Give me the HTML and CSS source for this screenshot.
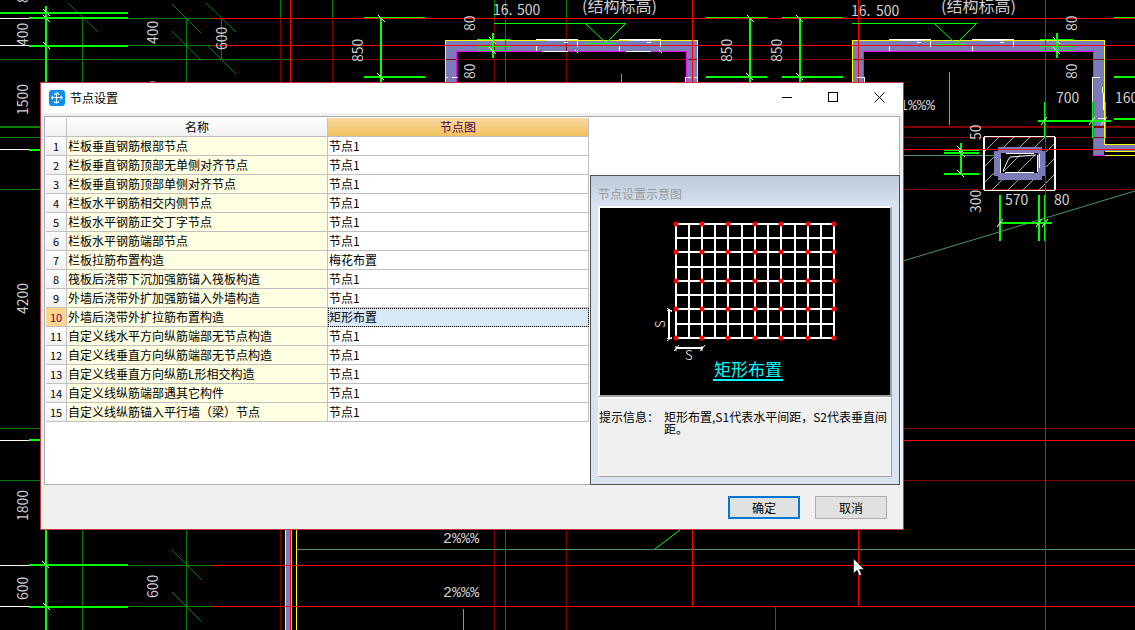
FILE: index.html
```html
<!DOCTYPE html>
<html lang="zh-CN">
<head>
  <meta charset="UTF-8" />
  <meta name="viewport" content="width=device-width, initial-scale=1.0"/>
  <title>节点设置</title>
  <link rel="stylesheet" href="styles.css">
</head>
<body>
<div class="desktop">
  <svg class="drawing" aria-hidden="true">
    <!-- walls -->
    <path class="wall" d="M446 41h251v41h-11v-30h-229v30h-11z M853 41h251v104h31v6h-31v4h-10v-103h-230v30h-11z"/>
    <path class="wall" d="M286 530h6v400h-6z"/>

    <!-- axis grid -->
    <g class="axis-dim">
      <path d="M82.500 19V900M186.500 19V900M221.500 18V59M280.500 0V18M332.500 0V18M494.500 0V18M566.500 0V18"/>
      <path d="M128 18.500H212M128 45.500H212M0 59.500H290M0 137.500H40M0 189.500H40M0 428.500H40M0 480.500H40M128 565.500H212M128 606.500H212"/>
      <path d="M0 127H40" stroke-width="2"/>
    </g>
    <g class="axis-dark">
      <path d="M280.500 18V900M332.500 18V82M494.500 18V900M566.500 18V900"/>
      <path d="M290 59.500H4000M903 137.500H4000M903 189.500H4000M903 428.500H4000M903 480.500H4000"/>
      <path d="M903 127H4000" stroke-width="2"/>
    </g>
    <path class="hatch-dim" d="M68 3l30 29M172 4l29 29M206 3l30 29M172 31l30 30M208 46l28 28M172 550l30 30M172 592l30 30"/>
    <g class="slope">
      <path d="M297 549.500H4000M903 155.500H1003"/>
      <path class="smooth" d="M903 261L1135 191"/>
    </g>

    <!-- wall outlines -->
    <path class="outer" d="M445.500 82V40.500H697.500V82M852.500 82V40.500H1104.500V144.500H4000M1105 155.500H4000M1105 151.500H1135M285.500 530V900M291.500 530V900M296.500 530V900"/>
    <path class="inner" d="M456.500 82V51.500H686.500V82M863.500 82V51.500H1093.500V155.500H1105"/>

    <!-- column -->
    <path class="hatch" d="M984 152l15-15M984 167l30-30M984 183l46-46M992 190l53-53M1008 190l47-47M1023 190l32-32M1039 190l16-16"/>
    <path class="wall" d="M998 147h44v4h3v25h-3v4h-44v-4h-4v-25h4z"/>
    <path d="M1001 153h37v20h-37z"/>
    <path class="hatch" d="M1003 172l17-17M1018 172l17-17"/>
    <path class="white2" d="M984 137V190M1055 137V190"/>
    <path class="white" d="M984 136.500H1055M984 190.500H1055M1000.500 159V173M1006 153.500H1034M1005 172.500H1034M1037.500 155V172M1039.500 154V168"/>
    <path class="white smooth" d="M1003 171l5-11 2-3 26-2"/>

    <!-- axes -->
    <g class="axis">
      <path d="M290.500 0V900M505.500 0V900M692.500 0V606M858.500 0V606M1045.500 0V900M775.500 606V900"/>
      <path d="M212 18.500H4000M212 45.500H4000M903 149.500H4000M903 440.500H4000M212 565.500H4000M212 606.500H4000"/>
    </g>
    <path class="white" d="M0 18.500H29M0 45.500H29M0 149.500H29M0 440.500H29M0 565.500H29M0 606.500H29"/>

    <!-- windows in the walls -->
    <path class="white" d="M536 39.500H578M546 40.500H568M536.500 46V51M542 51.500H568M577.500 41V47M619 39.500H661M629 40.500H651M619.500 46V51M626 51.500H651M660.500 41V47M889 39.500H931M899 40.500H921M889.500 46V51M930.500 41V47M972 39.500H1014M982 40.500H1004M972.500 46V51M1013.500 41V47"/>
    <path class="white" d="M564 42.500h4M647 42.500h4M917 42.500h4M1000 42.500h4M575 50l3 3M659 50l3 3M446 77.500h2M452 77.500h6M685.500 82v-5h5M694 77.500h4M857 77.500h7v4M1092.500 102V77.500h7M1102.500 87v6M1103.500 93v17M1098 118.500h8"/>

    <!-- dimensions -->
    <g class="dim2">
      <path d="M46 6V900M0 13H128M29 18H128M29 46H128M29 150H41M29 440H41M29 565H128M29 607H128"/>
      <path d="M381 17V82M750 17V82M800 17V82M364 77H425M706 77H767M782 77H843M1114 77H4000M1114 119H4000"/>
      <path d="M493 33V58M1057 33V58M1038 121H1111M961 143V175M944 153H979M944 174H979"/>
      <path d="M1000 195V241M1039 195V241M1000 223H1052"/>
    </g>
    <g class="dim">
      <path d="M364 17.500H425M706 17.500H767M782 17.500H843M1114 17.500H4000M477 39.500H510M477 46.500H510M477 50.500H510M1040 39.500H1073M1040 46.500H1073M1040 50.500H1073"/>
      <path d="M1044.500 102V138M1092.500 102V138M1105.500 102V138M944 150.500H979M1044.500 195V241M621.500 74V82M949.500 72V125M463.500 609V900"/>
      <path d="M494 23.500H626M585 43.500H616M852 23.500H977M936 44.500H966"/>
      <path class="smooth" d="M586 24l20 19 19-19M935 24l21 20 20-20M655 549l25-19"/>
    </g>
    <path class="white tick" d="M43 9l7 7M43 15l7 7M43 42l7 7M42 561l7 7M43 603l7 7M378 15l7 7M377 73l7 7M747 15l7 7M746 73l7 7M796 15l7 7M796 73l7 7M489 37l7 7M489 47l7 7M1053 37l7 7M1053 47l7 7M957 146l7 7M958 150l7 7M957 170l7 7M1041 125l6-8M1089 125l6-8M1101 125l6-8M997 227l6-8M1036 227l6-8M1042 227l6-8"/>

    <!-- dimension texts -->
    <g class="cad-text">
      <text x="28" y="3" transform="rotate(-90 28 3)">80</text>
      <text x="28" y="46" transform="rotate(-90 28 46)">400</text>
      <text x="28" y="115" transform="rotate(-90 28 115)">1500</text>
      <text x="28" y="314" transform="rotate(-90 28 314)">4200</text>
      <text x="28" y="521" transform="rotate(-90 28 521)">1800</text>
      <text x="28" y="600" transform="rotate(-90 28 600)">600</text>
      <text x="158" y="44" transform="rotate(-90 158 44)">400</text>
      <text x="158" y="104" transform="rotate(-90 158 104)">400</text>
      <text x="158" y="598" transform="rotate(-90 158 598)">600</text>
      <text x="227" y="50" transform="rotate(-90 227 50)">600</text>
      <text x="363" y="62" transform="rotate(-90 363 62)">850</text>
      <text x="732" y="62" transform="rotate(-90 732 62)">850</text>
      <text x="782" y="62" transform="rotate(-90 782 62)">850</text>
      <text x="475" y="31" transform="rotate(-90 475 31)">80</text>
      <text x="475" y="79" transform="rotate(-90 475 79)">80</text>
      <text x="1077" y="31" transform="rotate(-90 1077 31)">80</text>
      <text x="1077" y="79" transform="rotate(-90 1077 79)">80</text>
      <text x="981" y="140" transform="rotate(-90 981 140)">50</text>
      <text x="981" y="213" transform="rotate(-90 981 213)">300</text>
      <text x="493" y="15">16.</text>
      <text x="517" y="15">500</text>
      <text x="851" y="16">16.</text>
      <text x="876" y="16">500</text>
      <text x="1056" y="103">700</text>
      <text x="1115" y="103">1600</text>
      <text x="1005" y="205">570</text>
      <text x="1054" y="205">80</text>
      <text class="label" x="582" y="12">(结构标高)</text>
      <text class="label" x="941" y="12">(结构标高)</text>
      <text class="slope-text" x="899" y="110">1%%%</text>
      <text class="slope-text" x="443" y="543">2%%%</text>
      <text class="slope-text" x="443" y="597">2%%%</text>
    </g>
  </svg>

  <div class="dialog" role="dialog" aria-labelledby="dialogTitle">
    <div class="title-bar">
      <svg class="app-icon" viewBox="0 0 16 16">
        <rect width="16" height="16" rx="3" fill="#0d8eef"/>
        <path d="M7.500 4v9M3 7.500h9.500M5.500 5C6 2.500 9.500 2.500 10 5M4 6C2.500 6.500 2.500 8.500 4 9M11.500 6C13.500 6.500 13.500 9 11.500 9M5 11.500C6 13.500 9.500 13.500 10 11" fill="none" stroke="#fff" stroke-width="1.100"/>
      </svg>
      <span class="title" id="dialogTitle">节点设置</span>
      <button class="win-btn" aria-label="最小化"><svg viewBox="0 0 11 11"><path d="M0 5.500h10"/></svg></button>
      <button class="win-btn" aria-label="最大化"><svg viewBox="0 0 11 11"><path d="M.5.500h9v9h-9z"/></svg></button>
      <button class="win-btn" aria-label="关闭"><svg viewBox="0 0 11 11"><path class="smooth" d="M.5.500l10 10M10.500.500l-10 10"/></svg></button>
    </div>

    <div class="workspace">
      <div class="grid-area">
        <table class="node-table">
          <colgroup><col class="col-num"><col><col></colgroup>
          <thead>
            <tr><th></th><th>名称</th><th class="active">节点图</th></tr>
          </thead>
          <tbody>
            <tr><th>1</th><td class="name">栏板垂直钢筋根部节点</td><td>节点1</td></tr>
            <tr><th>2</th><td class="name">栏板垂直钢筋顶部无单侧对齐节点</td><td>节点1</td></tr>
            <tr><th>3</th><td class="name">栏板垂直钢筋顶部单侧对齐节点</td><td>节点1</td></tr>
            <tr><th>4</th><td class="name">栏板水平钢筋相交内侧节点</td><td>节点1</td></tr>
            <tr><th>5</th><td class="name">栏板水平钢筋正交丁字节点</td><td>节点1</td></tr>
            <tr><th>6</th><td class="name">栏板水平钢筋端部节点</td><td>节点1</td></tr>
            <tr><th>7</th><td class="name">栏板拉筋布置构造</td><td>梅花布置</td></tr>
            <tr><th>8</th><td class="name">筏板后浇带下沉加强筋锚入筏板构造</td><td>节点1</td></tr>
            <tr><th>9</th><td class="name">外墙后浇带外扩加强筋锚入外墙构造</td><td>节点1</td></tr>
            <tr class="selected"><th>10</th><td class="name">外墙后浇带外扩拉筋布置构造</td><td class="current">矩形布置</td></tr>
            <tr><th>11</th><td class="name">自定义线水平方向纵筋端部无节点构造</td><td>节点1</td></tr>
            <tr><th>12</th><td class="name">自定义线垂直方向纵筋端部无节点构造</td><td>节点1</td></tr>
            <tr><th>13</th><td class="name">自定义线垂直方向纵筋L形相交构造</td><td>节点1</td></tr>
            <tr><th>14</th><td class="name">自定义线纵筋端部遇其它构件</td><td>节点1</td></tr>
            <tr><th>15</th><td class="name">自定义线纵筋锚入平行墙（梁）节点</td><td>节点1</td></tr>
          </tbody>
        </table>
      </div>

      <div class="preview">
        <div class="preview-title">节点设置示意图</div>
        <div class="preview-image">
          <svg viewBox="0 0 290 187">
            <path class="bars" d="M76 16V130M89 16V130M102 16V130M115 16V130M128 16V130M142 16V130M155 16V130M168 16V130M181 16V130M195 16V130M208 16V130M221 16V130M234 16V130"/>
            <path class="bars" d="M75 16H235M75 30H235M75 44H235M75 59H235M75 73H235M75 87H235M75 101H235M75 116H235M75 130H235"/>
            <path class="ties" d="M76 16h0M102 16h0M128 16h0M155 16h0M181 16h0M208 16h0M234 16h0M76 44h0M102 44h0M128 44h0M155 44h0M181 44h0M208 44h0M234 44h0M76 73h0M102 73h0M128 73h0M155 73h0M181 73h0M208 73h0M234 73h0M76 101h0M102 101h0M128 101h0M155 101h0M181 101h0M208 101h0M234 101h0M76 130h0M102 130h0M128 130h0M155 130h0M181 130h0M208 130h0M234 130h0"/>
            <path class="bars" d="M69 101V131M76 140H103"/>
            <path class="arrows" d="M67 100l5 4M67 133l5-4M74 143l5-6M76 138v5M100 143l5-6M102 138v5M67 102.500h5M67 130.500h5"/>
            <text class="mark" x="65" y="120" transform="rotate(-90 65 120)">S</text>
            <text class="mark" x="85" y="152">S</text>
            <text class="caption" x="114" y="168">矩形布置</text>
            <path class="caption-line" d="M113 172H183"/>
          </svg>
        </div>
        <div class="hint">
          <span class="hint-label">提示信息：</span>
          <span class="hint-text">矩形布置,S1代表水平间距，S2代表垂直间距。</span>
        </div>
      </div>
    </div>

    <div class="actions">
      <button class="btn primary">确定</button>
      <button class="btn">取消</button>
    </div>
  </div>

  <svg class="cursor" viewBox="0 0 12 19" aria-hidden="true">
    <path d="M.5.500v15l3.500-3.200 2.300 5.400 2.400-1-2.300-5.200h4.800z" fill="#fff" stroke="#000" stroke-width=".6"/>
  </svg>
</div>
</body>
</html>
```
FILE: styles.css
```css
* {
  box-sizing: border-box;
}

body {
  margin: 0;
  background: #000;
  color: #000;
  font-family: "Noto Sans CJK SC", sans-serif;
  font-size: 12px;
}

.desktop {
  position: relative;
  min-height: 100vh;
  padding: 82px 231px 0 40px;
  overflow: hidden;
}

/* CAD drawing behind the dialog */
.drawing {
  position: absolute;
  top: 0;
  left: 0;
  width: 100%;
  height: 100%;
}

.drawing path {
  shape-rendering: crispEdges;
}

.drawing .smooth,
.drawing .tick,
.drawing .hatch,
.drawing .hatch-dim {
  shape-rendering: auto;
}

.wall { fill: #7b7bb7; }
.axis-dim { stroke: #008000; }
.axis-dark { stroke: #800000; }
.axis { stroke: #f00; }
.slope { stroke: #4a9460; }
.hatch-dim { stroke: #008000; }
.hatch { stroke: #b0b0b0; }
.outer { stroke: #ff0; fill: none; }
.inner { stroke: #f0f; fill: none; }
.white { stroke: #fff; fill: none; }
.white2 { stroke: #fff; stroke-width: 2; }
.dim { stroke: #0f0; fill: none; }
.dim2 { stroke: #0f0; stroke-width: 2; }

.cad-text {
  fill: #d0d0d0;
  font-size: 14px;
}

.cad-text .label {
  font-size: 16px;
}

.cad-text .slope-text {
  font-family: "Liberation Mono", monospace;
  font-size: 15px;
}

/* dialog window */
.dialog {
  position: relative;
  background: #f0f0f0;
  border: 1px solid #c4393f;
}

.title-bar {
  display: flex;
  align-items: center;
  height: 30px;
  padding: 0 1px 1px 8px;
  background: #fff;
}

.app-icon {
  width: 16px;
  height: 16px;
}

.title {
  flex: 1;
  margin-left: 5px;
  line-height: 16px;
}

.win-btn {
  width: 46px;
  height: 29px;
  padding: 0;
  border: 0;
  background: none;
}

.win-btn svg {
  display: block;
  width: 11px;
  height: 11px;
  margin: 0 auto;
}

.win-btn path {
  fill: none;
  stroke: #000;
  shape-rendering: crispEdges;
}

.win-btn .smooth {
  shape-rendering: auto;
}

.workspace {
  display: flex;
  margin: 3px 3px 0;
  min-height: 369px;
  background: #fff;
  border: 1px solid #a8abb0;
}

.grid-area {
  flex: 1;
  padding: 1px;
}

.node-table {
  width: 100%;
  table-layout: fixed;
  border-collapse: separate;
  border-spacing: 0;
}

.col-num {
  width: 21px;
}

.node-table th,
.node-table td {
  height: 19px;
  padding: 0 0 0 1px;
  border-right: 1px solid #c0c0c0;
  border-bottom: 1px solid #c0c0c0;
  line-height: 18px;
  font-weight: normal;
  text-align: left;
  white-space: nowrap;
}

.node-table th {
  padding: 0;
  background: linear-gradient(#fff, #f0f0f0);
  text-align: center;
}

.node-table tbody th {
  font-size: 11px;
}

.node-table .active {
  background: linear-gradient(#f9d99f, #f1c05f);
  color: #500050;
}

.node-table .selected th {
  background: #ffd58d;
  color: #600060;
}

.node-table .name {
  background: #ffffe1;
}

.node-table .current {
  background: #d9e9f8;
  outline: 1px dotted #000;
  outline-offset: -1px;
}

/* preview panel */
.preview {
  flex: none;
  align-self: flex-end;
  width: 310px;
  margin: 0 -1px -1px 0;
  padding: 0 7px 7px;
  border: 1px solid #505050;
  background: linear-gradient(#bccad9, #d7e3f1 30px);
}

.preview-title {
  height: 30px;
  padding-top: 8px;
  line-height: 20px;
  color: #999;
}

.preview-image {
  border: 2px solid #a0a0a0;
  border-top-color: #fff;
  border-left-color: #fff;
  background: #000;
}

.preview-image svg {
  display: block;
  width: 100%;
}

.bars {
  stroke: #fff;
  stroke-width: 2;
  shape-rendering: crispEdges;
}

.ties {
  stroke: #f00;
  stroke-width: 5;
  stroke-linecap: round;
}

.arrows {
  stroke: #fff;
}

.mark {
  fill: #fff;
  font-size: 13px;
  font-weight: 300;
}

.caption {
  fill: #0ff;
  font-size: 17px;
}

.caption-line {
  stroke: #0ff;
  stroke-width: 2;
}

.hint {
  display: flex;
  height: 80px;
  padding-top: 13px;
  border: 1px solid #a0a0a0;
  border-top-color: #fff;
  border-left-color: #fff;
  background: #f0f0f0;
  line-height: 12px;
}

.hint-label {
  flex: none;
  width: 65px;
}

/* buttons */
.actions {
  display: flex;
  justify-content: flex-end;
  gap: 15px;
  padding: 11px 16px 10px;
}

.btn {
  width: 72px;
  height: 23px;
  padding: 0;
  border: 1px solid #adadad;
  background: #e1e1e1;
  color: #000;
  font-family: inherit;
  font-size: 12px;
  line-height: 18px;
}

.btn.primary {
  border: 2px solid #0078d7;
}

.cursor {
  position: absolute;
  top: 558px;
  left: 853px;
  width: 12px;
  height: 19px;
}
```
